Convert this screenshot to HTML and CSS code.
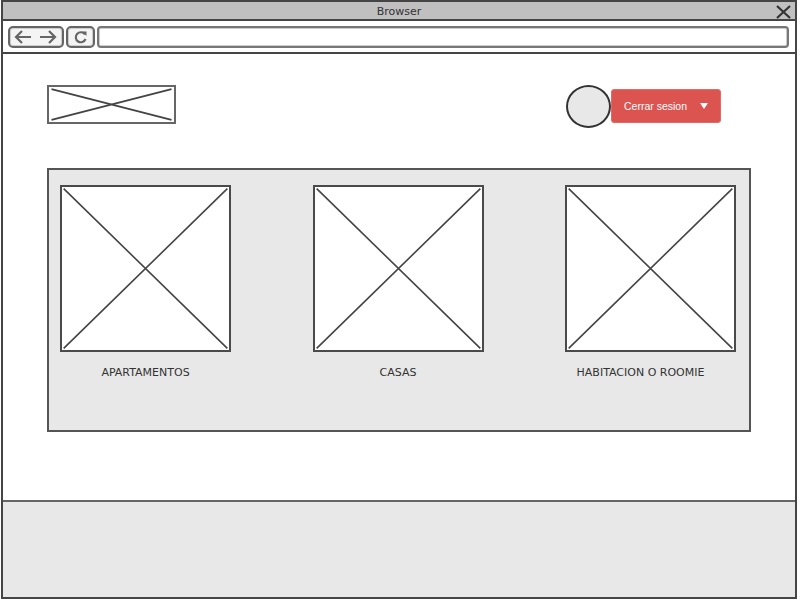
FILE: index.html
```html
<!DOCTYPE html>
<html lang="es">
<head>
    <meta charset="UTF-8">
    <meta name="viewport" content="width=device-width, initial-scale=1.0">
    <title>Browser</title>
    <link rel="stylesheet" href="styles.css">
</head>
<body>
    <div class="frame">
        <div class="titlebar">
            <span class="title">Browser</span>
            <svg class="close" width="15" height="14" viewBox="0 0 15 14">
                <path d="M1 1 L14 13 M14 1 L1 13" stroke="#333" stroke-width="2.2" fill="none"/>
            </svg>
        </div>

        <div class="toolbar">
            <div class="nav-btn nav-arrows">
                <svg width="44" height="14" viewBox="0 0 44 14">
                    <path d="M2 7 H17 M8 1 L2 7 L8 13" stroke="#666" stroke-width="2.2" fill="none"/>
                    <path d="M26 7 H41 M35 1 L41 7 L35 13" stroke="#666" stroke-width="2.2" fill="none"/>
                </svg>
            </div>
            <div class="nav-btn nav-reload">
                <svg width="14" height="14" viewBox="0 0 14 14">
                    <path d="M11 4.5 A5 5 0 1 0 11.5 9" stroke="#666" stroke-width="2.2" fill="none"/>
                    <path d="M8 1.5 L12.5 1.5 L12.5 6 Z" fill="#666"/>
                </svg>
            </div>
            <div class="url-box"></div>
        </div>

        <div class="content">
            <div class="header">
                <div class="logo">
                    <svg width="100%" height="100%" viewBox="0 0 100 100" preserveAspectRatio="none">
                        <path d="M2 6 L98 94 M2 94 L98 6" stroke="#444" stroke-width="2" vector-effect="non-scaling-stroke" fill="none"/>
                    </svg>
                </div>
                <div class="user">
                    <div class="avatar"></div>
                    <div class="logout">
                        <span>Cerrar sesion</span>
                        <span class="caret"></span>
                    </div>
                </div>
            </div>

            <div class="panel">
                <div class="card">
                    <div class="placeholder">
                        <svg width="100%" height="100%" viewBox="0 0 100 100" preserveAspectRatio="none">
                            <path d="M1 1 L99 99 M1 99 L99 1" stroke="#444" stroke-width="1.6" vector-effect="non-scaling-stroke" fill="none"/>
                        </svg>
                    </div>
                    <div class="label">APARTAMENTOS</div>
                </div>
                <div class="card">
                    <div class="placeholder">
                        <svg width="100%" height="100%" viewBox="0 0 100 100" preserveAspectRatio="none">
                            <path d="M1 1 L99 99 M1 99 L99 1" stroke="#444" stroke-width="1.6" vector-effect="non-scaling-stroke" fill="none"/>
                        </svg>
                    </div>
                    <div class="label">CASAS</div>
                </div>
                <div class="card">
                    <div class="placeholder">
                        <svg width="100%" height="100%" viewBox="0 0 100 100" preserveAspectRatio="none">
                            <path d="M1 1 L99 99 M1 99 L99 1" stroke="#444" stroke-width="1.6" vector-effect="non-scaling-stroke" fill="none"/>
                        </svg>
                    </div>
                    <div class="label label-shift">HABITACION O ROOMIE</div>
                </div>
            </div>
        </div>

        <div class="footer"></div>
    </div>
</body>
</html>
```

FILE: styles.css
```css
body {
    margin: 0;
    background: #fff;
    font-family: "DejaVu Sans", sans-serif;
    color: #333;
}

.frame {
    width: 792px;
    height: 595px;
    margin: 0 0 0 1px;
    border: 2px solid #454545;
    display: flex;
    flex-direction: column;
}

.titlebar {
    position: relative;
    height: 17px;
    background: #c0c0c0;
    border-bottom: 2px solid #454545;
    display: flex;
    justify-content: center;
    align-items: flex-end;
}

.title {
    font-size: 11px;
    line-height: 13px;
    color: #333;
    margin-bottom: 1px;
}

.close {
    position: absolute;
    right: 4px;
    top: 3px;
}

.toolbar {
    height: 31px;
    border-bottom: 2px solid #454545;
    display: flex;
    align-items: center;
    padding: 0 6px 0 5px;
    gap: 2px;
}

.nav-btn {
    height: 18px;
    border: 2px solid #666;
    border-radius: 5px;
    box-shadow: inset 0 0 0 1px #ccc;
    background: #f4f4f4;
    display: flex;
    align-items: center;
    justify-content: center;
}

.nav-arrows {
    width: 52px;
}

.nav-reload {
    width: 25px;
}

.url-box {
    flex: 1;
    height: 18px;
    border: 2px solid #777;
    border-radius: 4px;
    box-shadow: inset 0 0 0 1px #ccc;
    background: #fff;
}

.content {
    flex: 1;
    padding: 31px 44px 0 44px;
}

.header {
    display: flex;
    justify-content: space-between;
    align-items: center;
    height: 42px;
}

.logo {
    width: 125px;
    height: 35px;
    border: 2px solid #666;
    margin-top: -3px;
}

.logo svg {
    display: block;
}

.user {
    display: flex;
    align-items: center;
    margin-right: 30px;
}

.avatar {
    width: 41px;
    height: 39px;
    border: 2px solid #333;
    border-radius: 50%;
    background: #e8e8e8;
}

.logout {
    width: 110px;
    height: 34px;
    box-sizing: border-box;
    background: #dc5450;
    border: 1px solid #e26a66;
    border-radius: 3px;
    color: #fff;
    font-family: "Liberation Sans", sans-serif;
    font-size: 10.5px;
    display: flex;
    align-items: center;
    justify-content: space-between;
    padding: 0 12px 0 12px;
}

.caret {
    width: 0;
    height: 0;
    border-left: 4px solid transparent;
    border-right: 4px solid transparent;
    border-top: 6px solid #fff;
    margin-top: -1px;
}

.panel {
    margin-top: 41px;
    height: 245px;
    border: 2px solid #555;
    background: #e8e8e8;
    display: flex;
    justify-content: space-between;
    padding: 15px 13px 0 11px;
}

.card {
    width: 171px;
}

.placeholder {
    height: 163px;
    border: 2px solid #4a4a4a;
    background: #fff;
}

.placeholder svg {
    display: block;
}

.label {
    margin-top: 14px;
    text-align: center;
    font-size: 11px;
    color: #333;
}

.label-shift {
    padding-right: 20px;
}

.footer {
    height: 95px;
    border-top: 2px solid #666;
    background: #e8e8e8;
}
```
